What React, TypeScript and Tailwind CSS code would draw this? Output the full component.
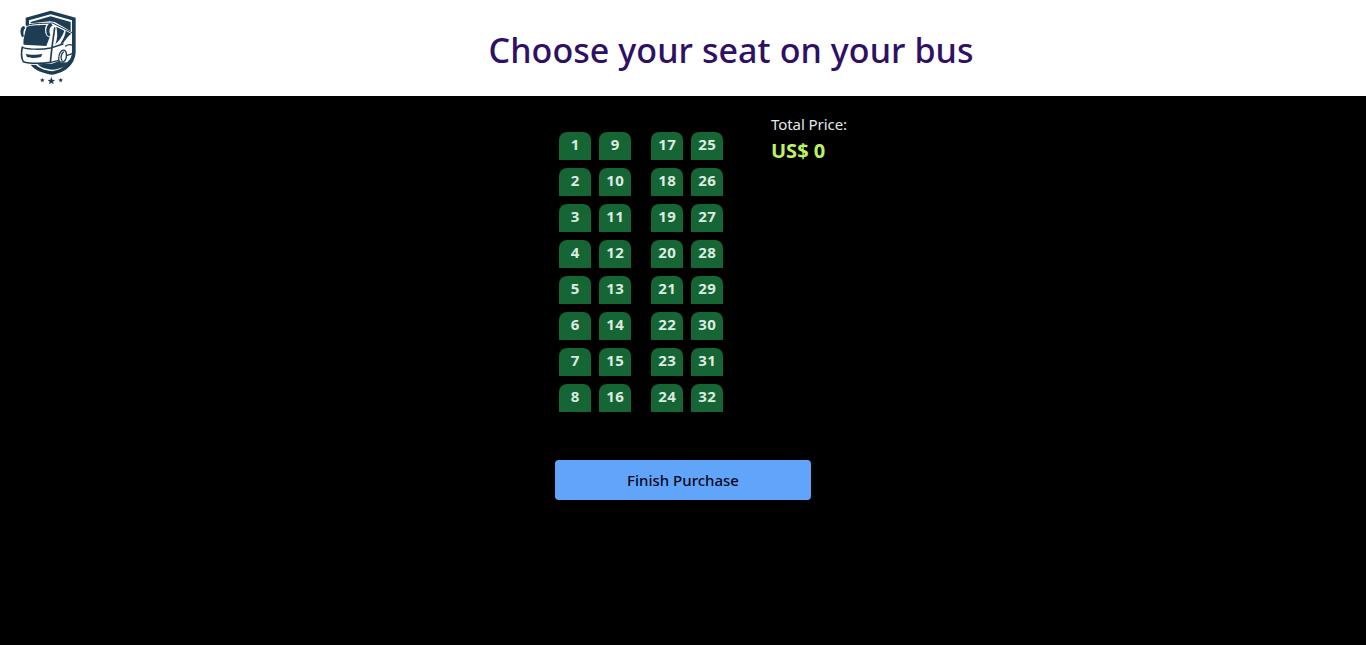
function BusLogo() {
  return (
    <svg viewBox="0 0 300 300" className="h-[100px] w-[100px] shrink-0" aria-label="Bus logo" role="img">
      <g fill="#1d3d54">
        <path d="M77 53 L152 32 L227 53 V154 C227 190 198 219 157 224 C127 220 102 209 92 194 L108 195 C122 207 137 212 157 214 C190 209 216 187 216 154 V61 L152 43 L87 61 V75 H77 Z" />
        <path d="M92 66 L152 49 L212 66 V94 L196 84 L164 66 L150 64 L92 70 Z" />
        <path d="M80 80 C94 76 122 75 139 75 C135 84 136 97 142 106 L150 109 L139 138 L71 134 C68 124 75 96 80 80 Z" />
        <path d="M72 78 C59 79 59 102 67 112 L72 109 C69 102 70 88 76 84 Z" />
        <path d="M169 80 L193 92 C188 107 179 121 166 133 C173 115 173 99 169 80 Z" />
        <path d="M197 92 L214 101 C204 108 196 120 189 130 L181 132 C190 116 197 104 197 92 Z" />
        <path d="M77 161 C90 166 113 164 127 162 L123 171 C105 175 86 174 81 171 Z" />
        <path d="M112 193 L155 191 L176 184 L182 188 L201 187 L222 166 C216 193 186 207 159 209 C136 208 122 202 112 193 Z" />
        <path d="M154 230 L157 239 L165 240 L159 245 L161 253 L154 248 L147 253 L149 245 L143 240 L151 239 Z" />
        <path d="M127 234 L129 238 L134 239 L130 242 L131 247 L127 244 L123 247 L124 242 L120 239 L125 238 Z" />
        <path d="M182 234 L184 238 L189 239 L185 242 L186 247 L182 244 L178 247 L179 242 L175 239 L180 238 Z" />
      </g>
      <g fill="none" stroke="#1d3d54" strokeWidth="4" strokeLinejoin="round" strokeLinecap="round">
        <path d="M79 77 C101 68 137 71 158 69 L216 98" strokeWidth="3" />
        <path d="M67 141 C64 155 64 175 70 185 C91 192 133 190 151 187 L156 141 L164 84" strokeWidth="5" />
        <path d="M69 143 C88 149 125 149 152 144 L189 132" />
        <path d="M176 180 C175 160 185 147 194 151 C202 156 201 179 192 184 C185 188 178 187 176 180 Z" />
        <path d="M190 156 C183 162 181 176 186 181 M201 166 L220 160 M151 187 L174 182 M197 138 C204 133 212 133 219 136" />
      </g>
      <path d="M154 71 C142 69 138 84 139 96 C140 108 147 111 152 105 C146 97 147 80 158 77 Z" fill="#1d3d54" />
      <path d="M144 72 C135 80 134 98 142 108 C147 113 153 108 155 102" fill="none" stroke="#fff" strokeWidth="3" />
    </svg>
  );
}

function SeatColumn({ first }: { first: number }) {
  return (
    <div className="flex flex-col gap-2">
      {Array.from({ length: 8 }, (_, i) => (
        <button
          key={i}
          className="flex h-7 w-8 justify-center rounded-t-lg bg-[#166534] pl-[0.5px] text-[15px] leading-[25px] font-bold tracking-[0.5px] text-[#dcebe1]"
        >
          {first + i}
        </button>
      ))}
    </div>
  );
}

export default function App() {
  return (
    <div className="min-h-[645px] bg-black font-['Noto_Sans',sans-serif]">
      <header className="flex h-24 items-center overflow-hidden bg-white">
        <div className="flex h-24 w-24 shrink-0 items-start">
          <BusLogo />
        </div>
        <h1 className="flex-1 pt-1 text-center text-[34px] leading-10 font-medium tracking-[0.07px] whitespace-nowrap text-[#2e1065]">
          Choose your seat on your bus
        </h1>
      </header>
      <main className="mx-auto w-64">
        <div className="flex items-start">
          <div className="flex pt-9 pl-1">
            <div className="flex gap-2">
              <SeatColumn first={1} />
              <SeatColumn first={9} />
            </div>
            <div className="ml-5 flex gap-2">
              <SeatColumn first={17} />
              <SeatColumn first={25} />
            </div>
          </div>
          <div className="ml-12 pt-4 whitespace-nowrap">
            <p className="text-[15px] leading-[25px] tracking-[-0.06px] text-[#e5e7eb]">Total Price:</p>
            <p className="text-xl leading-7 font-bold text-[#bef264]">US$ 0</p>
          </div>
        </div>
        <button className="mt-12 h-10 w-64 rounded bg-[#60a5fa] pt-px text-[15px] font-medium text-[#020617]">
          Finish Purchase
        </button>
      </main>
    </div>
  );
}
